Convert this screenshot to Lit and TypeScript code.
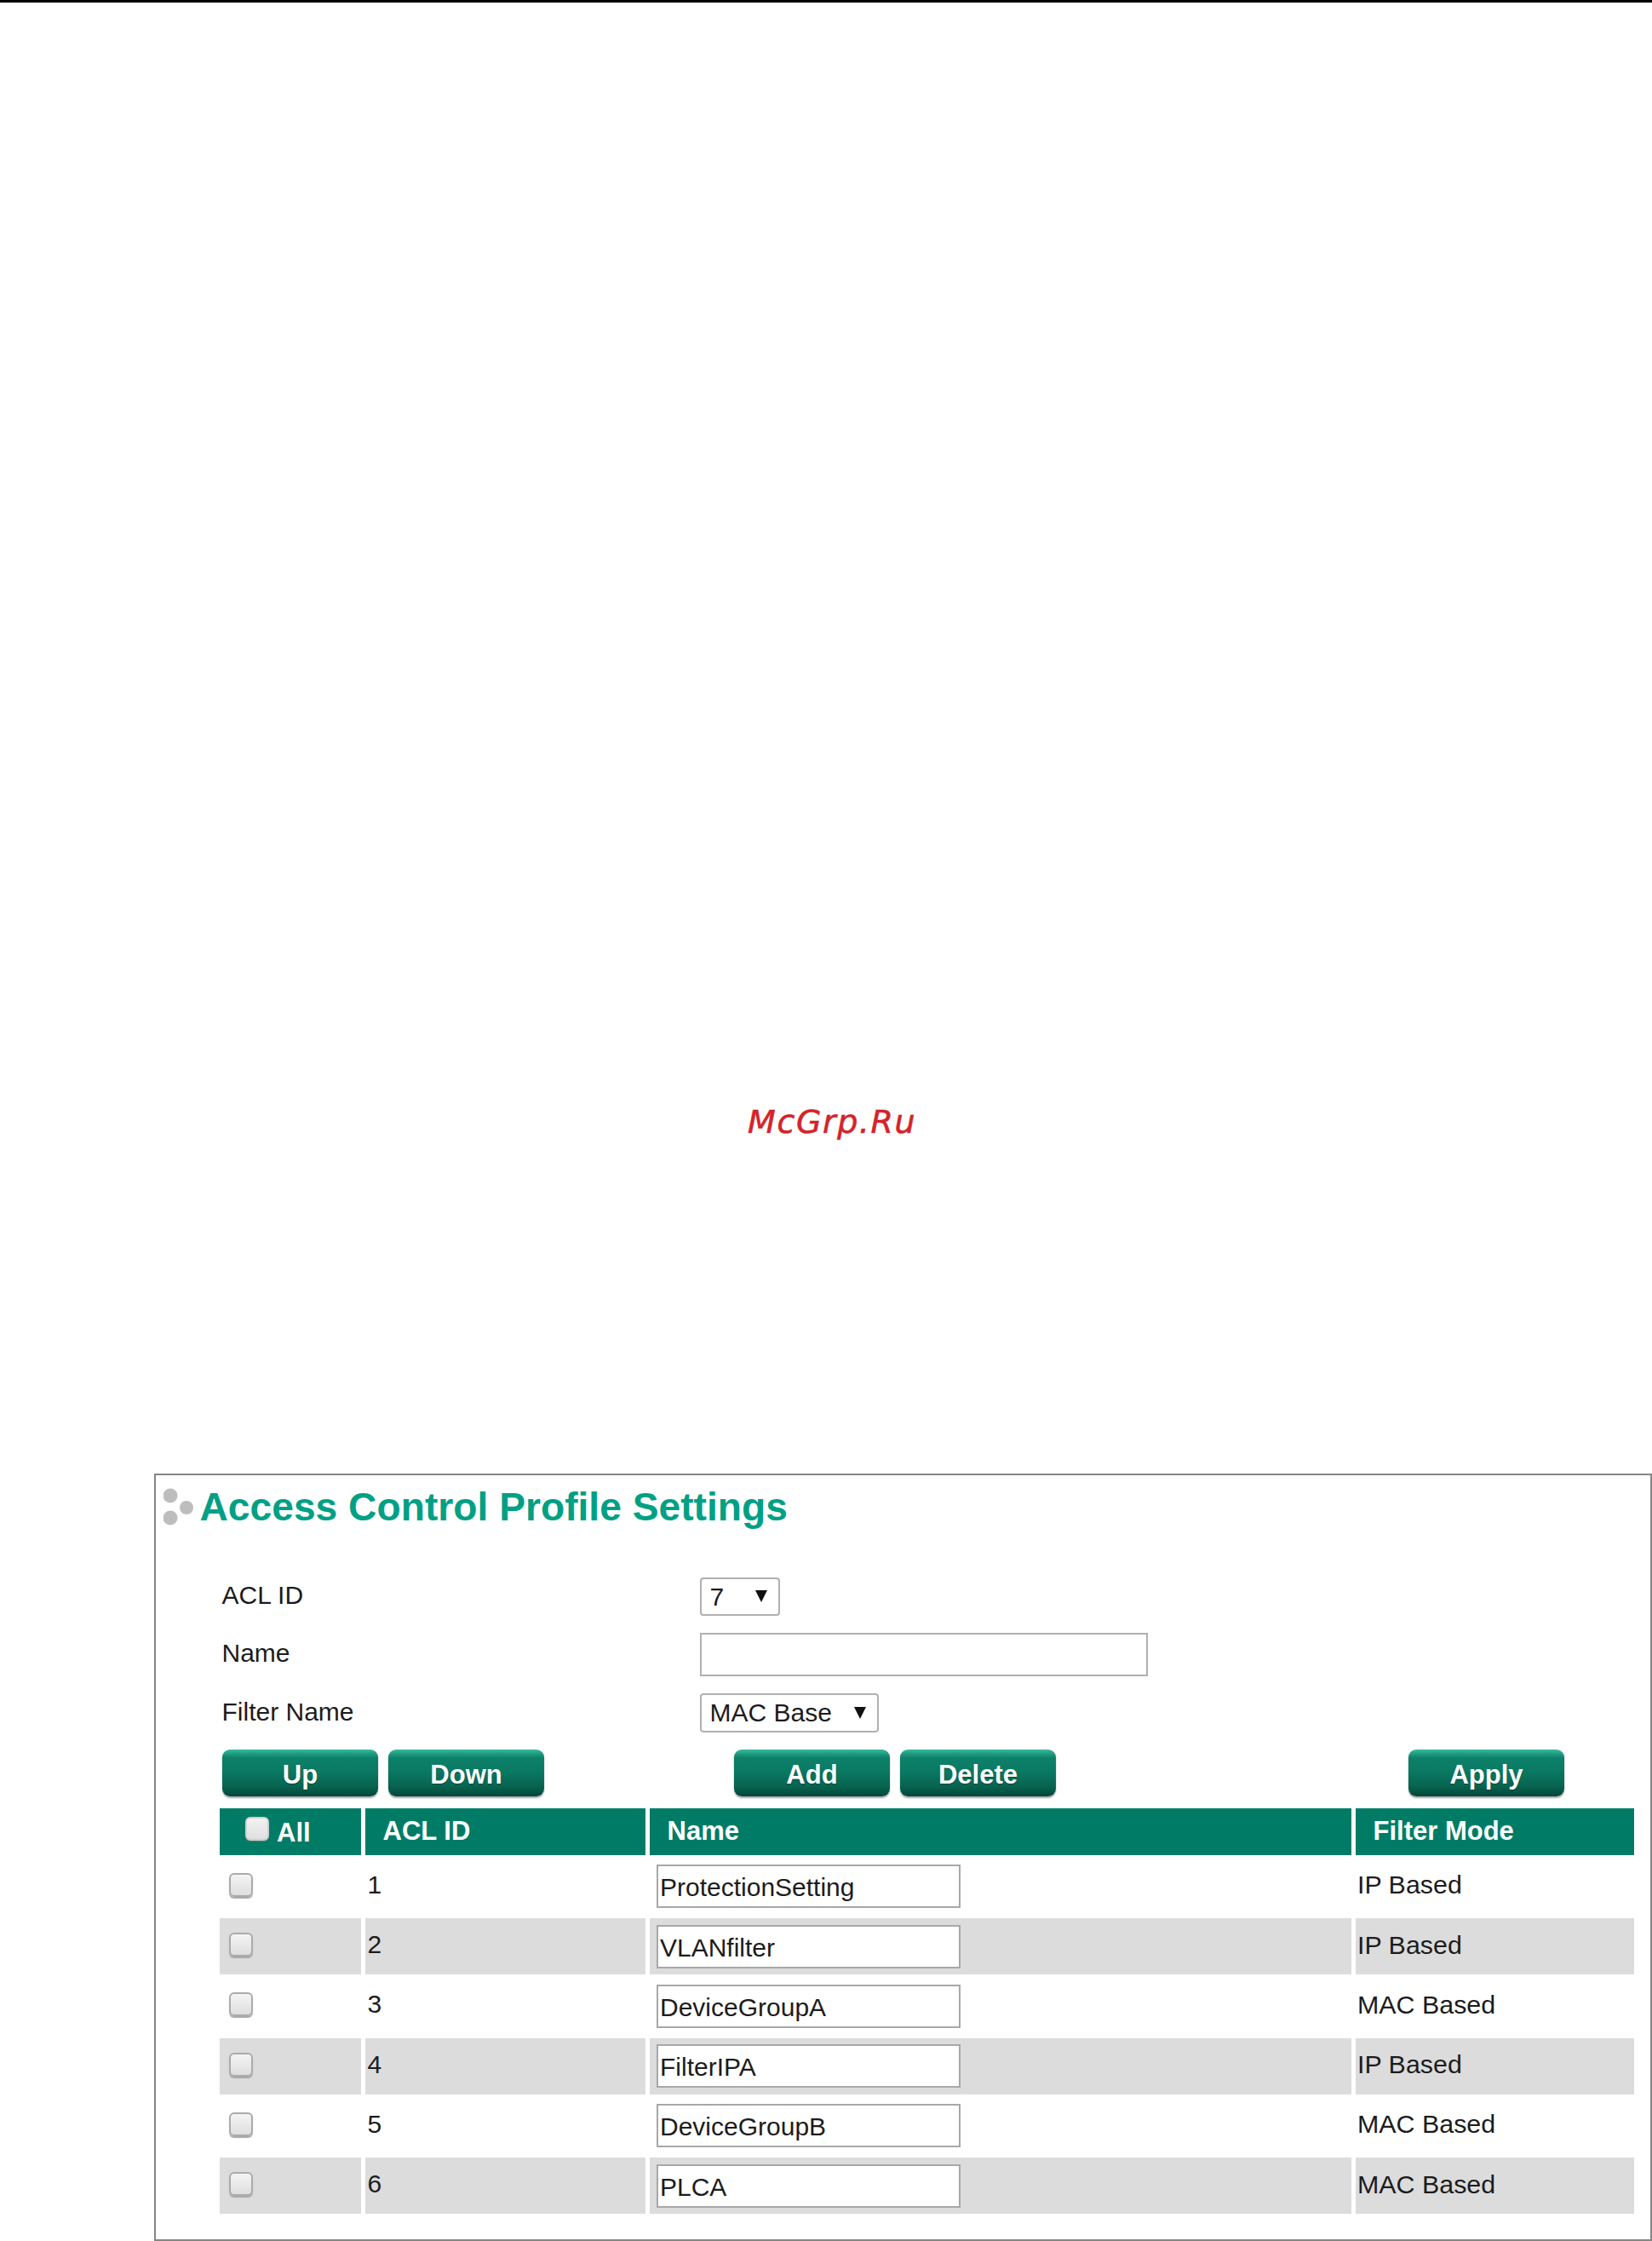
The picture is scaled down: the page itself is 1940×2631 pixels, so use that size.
import { LitElement, html, css } from "lit";
import { customElement } from "lit/decorators.js";

const ROWS = [
  { id: "1", name: "ProtectionSetting", mode: "IP Based" },
  { id: "2", name: "VLANfilter", mode: "IP Based" },
  { id: "3", name: "DeviceGroupA", mode: "MAC Based" },
  { id: "4", name: "FilterIPA", mode: "IP Based" },
  { id: "5", name: "DeviceGroupB", mode: "MAC Based" },
  { id: "6", name: "PLCA", mode: "MAC Based" },
];

@customElement("app-root")
export class AppRoot extends LitElement {
  static styles = css`
    :host {
      display: flex;
      flex-direction: column;
      width: 1940px;
      height: 2631px;
      background: #fff;
      font-family: "Liberation Sans", Arial, sans-serif;
      color: #1c1c1c;
      font-size: 30px;
      overflow: hidden;
    }
    .rule { height: 3px; background: #000; flex: none; }
    .mark {
      margin: 1291px 0 0 878px;
      font-family: "DejaVu Sans", sans-serif;
      font-style: italic;
      font-size: 38px;
      line-height: 46px;
      letter-spacing: 1.6px;
      color: #d4232a;
      -webkit-text-stroke: 0.6px #d4232a;
    }
    .panel {
      margin: auto 0 0 181px;
      width: 1759px;
      height: 901px;
      box-sizing: border-box;
      border: 2px solid #868686;
      display: flex;
      flex-direction: column;
    }
    .title-row {
      display: flex;
      align-items: flex-start;
      margin: 11px 0 0 9px;
      height: 54px;
    }
    .dots { width: 43px; height: 54px; flex: none; margin-top: 1px; }
    h1 {
      margin: -1px 0 0 -0.5px;
      font-size: 46.2px;
      line-height: 54px;
      font-weight: 700;
      color: #00a085;
      white-space: nowrap;
    }
    .form {
      display: grid;
      grid-template-columns: 561px max-content;
      grid-template-rows: 45px 51px 46px;
      row-gap: 20px;
      margin: 55px 0 0 77.5px;
      align-items: center;
      justify-items: start;
    }
    .label { padding-bottom: 3px; }
    .select {
      box-sizing: border-box;
      height: 100%;
      display: flex;
      align-items: center;
      justify-content: space-between;
      border: 2px solid #b0b0b0;
      border-radius: 4px;
      padding: 0 12px 0 10px;
      background: #fff;
    }
    .select svg { width: 16px; height: 16px; margin: 0 0 1px 0; flex: none; }
    .s7 { width: 94px; }
    .smac { width: 210px; }
    .form input {
      box-sizing: border-box;
      width: 526px;
      height: 51px;
      border: 2px solid #b0b0b0;
      background: #fff;
      outline: none;
    }
    .btns {
      display: flex;
      margin: 20px 0 0 78px;
      gap: 12px;
    }
    button {
      box-sizing: border-box;
      width: 183px;
      height: 55px;
      border: none;
      border-radius: 9px;
      padding: 5px 0 0;
      background: linear-gradient(#38bb9c 0, #1f9c82 9%, #0e8069 18%, #0a7a63 45%, #076450 78%, #03473a 100%);
      box-shadow: 0 2px 2px rgba(0, 0, 0, 0.35);
      color: #fff;
      font: 700 31px "Liberation Sans", Arial, sans-serif;
      text-shadow: 0 1px 1px rgba(0, 0, 0, 0.35);
    }
    .add { margin-left: 211px; }
    .apply { margin-left: 402px; }
    .table {
      display: grid;
      grid-template-columns: 166px 329px 824px 327px;
      grid-template-rows: 54.5px;
      grid-auto-rows: 66px;
      column-gap: 5px;
      row-gap: 4.25px;
      margin: 14px 0 0 75px;
      width: 1661px;
    }
    .th, .td {
      display: flex;
      align-items: center;
      box-sizing: border-box;
      white-space: nowrap;
    }
    .th {
      background: #007c66;
      color: #fff;
      font-weight: 700;
      font-size: 31px;
      padding-left: 20.5px;
    }
    .th.all { padding-left: 30px; gap: 9px; }
    .th.all span { padding-top: 4px; }
    .th.all input { margin: 0 0 7px; }
    .td { padding-left: 2px; font-size: 30.4px; }
    .td span { padding-bottom: 4px; }
    .td.id { padding-left: 2.5px; font-size: 30px; }
    .td.check { padding-left: 11px; }
    .td.name { padding-left: 8px; }
    .grey { background: #dcdcdc; }
    input[type="checkbox"] {
      appearance: none;
      box-sizing: border-box;
      width: 28px;
      height: 28px;
      margin: 0 0 4px;
      border: 2px solid #ababab;
      border-radius: 6px;
      background: linear-gradient(#f4f4f4, #dedede);
      box-shadow: 0 2px 1px #a8a8a8;
    }
    .th input[type="checkbox"] {
      background: linear-gradient(#f2f2f2, #e0e0e0);
      border-color: #cfcfcf;
      box-shadow: 0 1px 1px #55806f;
    }
    .td.name input {
      box-sizing: border-box;
      width: 357px;
      height: 51px;
      border: 2px solid #a8a8a8;
      padding: 3px 0 0 2px;
      background: #fff;
      font: 30px "Liberation Sans", Arial, sans-serif;
      color: #1c1c1c;
      outline: none;
    }
  `;

  private arrow() {
    return html`<svg viewBox="0 0 16 16"><polygon points="1,1 15,1 8,15" fill="#111"></polygon></svg>`;
  }

  render() {
    return html`
      <div class="rule"></div>
      <div class="mark">McGrp.Ru</div>
      <section class="panel">
        <div class="title-row">
          <svg class="dots" viewBox="0 0 43 54">
            <circle cx="8" cy="12" r="8.5" fill="#bdbdbd"></circle>
            <circle cx="27" cy="26" r="8" fill="#bdbdbd"></circle>
            <circle cx="8" cy="38" r="8.5" fill="#bdbdbd"></circle>
          </svg>
          <h1>Access Control Profile Settings</h1>
        </div>
        <div class="form">
          <div class="label">ACL ID</div>
          <div class="select s7"><span>7</span>${this.arrow()}</div>
          <div class="label">Name</div>
          <input type="text" />
          <div class="label">Filter Name</div>
          <div class="select smac"><span>MAC Base</span>${this.arrow()}</div>
        </div>
        <div class="btns">
          <button>Up</button>
          <button>Down</button>
          <button class="add">Add</button>
          <button>Delete</button>
          <button class="apply">Apply</button>
        </div>
        <div class="table">
          <div class="th all"><input type="checkbox" /><span>All</span></div>
          <div class="th">ACL ID</div>
          <div class="th">Name</div>
          <div class="th">Filter Mode</div>
          ${ROWS.map((r, i) => {
            const g = i % 2 === 1 ? "grey" : "";
            return html`
              <div class="td check ${g}"><input type="checkbox" /></div>
              <div class="td id ${g}"><span>${r.id}</span></div>
              <div class="td name ${g}"><input type="text" .value=${r.name} /></div>
              <div class="td ${g}"><span>${r.mode}</span></div>
            `;
          })}
        </div>
      </section>
    `;
  }
}
